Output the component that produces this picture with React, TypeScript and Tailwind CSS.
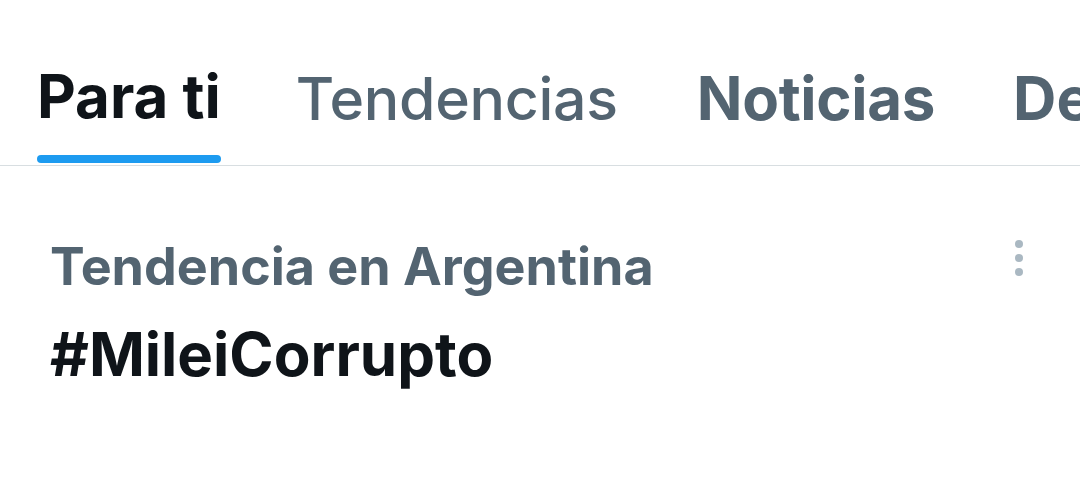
export default function App() {
  const font = { fontFamily: "Inter, 'Noto Sans', sans-serif" };
  return (
    <div className="w-[1080px] h-[503px] bg-white overflow-hidden" style={font}>
      <div className="flex items-end h-[166px] border-b border-[#d8dee1] whitespace-nowrap">
        <div className="flex flex-col items-center ml-[37px] w-[186px] pb-[2px]">
          <span className="text-[60px] font-bold text-[#0f1419] leading-none">Para ti</span>
          <div className="mt-[29px] h-[8px] w-full rounded-full bg-[#1d9bf0]"></div>
        </div>
        <span className="ml-[75px] mb-[37px] text-[59px] font-medium text-[#536471] leading-none tracking-[-0.3px]">Tendencias</span>
        <span className="ml-[79px] mb-[37px] text-[60px] font-bold text-[#536471] leading-none tracking-[-0.3px]">Noticias</span>
        <span className="ml-[78px] mb-[37px] text-[60px] font-bold text-[#536471] leading-none">De</span>
      </div>
      <div className="flex justify-between pl-[50px] pr-[57px] pt-[75px]">
        <div className="flex flex-col">
          <span className="text-[52px] font-bold text-[#536471] leading-none">Tendencia en Argentina</span>
          <span className="mt-[31px] text-[60px] font-bold text-[#0f1419] leading-none">#MileiCorrupto</span>
        </div>
        <div className="flex flex-col gap-[6px] -mt-[1px]">
          <div className="w-[8px] h-[8px] rounded-full bg-[#aab8c2]"></div>
          <div className="w-[8px] h-[8px] rounded-full bg-[#aab8c2]"></div>
          <div className="w-[8px] h-[8px] rounded-full bg-[#aab8c2]"></div>
        </div>
      </div>
    </div>
  );
}
